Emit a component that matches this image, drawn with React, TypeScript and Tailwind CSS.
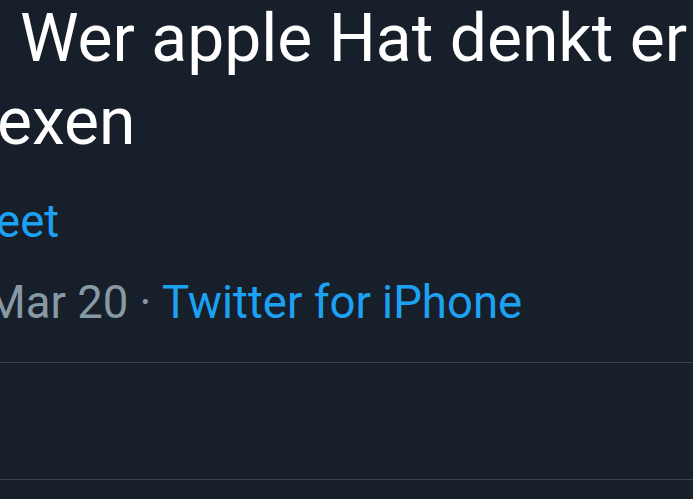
export default function App() {
  return (
    <div className="h-[499px] w-[693px] overflow-hidden bg-[#17202a] font-['Roboto','Liberation_Sans',sans-serif]">
      <div className="-mt-[3px] text-[66px] leading-[83px] text-white whitespace-nowrap">
        <p className="pl-[20px]">Wer apple Hat denkt er</p>
        <p className="-ml-[3px]">exen</p>
      </div>
      <div className="mt-[18px] text-[45.5px] leading-[81px] whitespace-nowrap">
        <p className="-ml-[64px] text-[#1da1f2]">Tweet</p>
        <p className="-ml-[14px]">
          <span className="text-[#8899a6]">Mar 20 · </span>
          <span className="text-[#1da1f2]">Twitter for iPhone</span>
        </p>
      </div>
      <div className="mt-[19px] h-[118px] border-y border-[#38444d]" />
    </div>
  );
}
